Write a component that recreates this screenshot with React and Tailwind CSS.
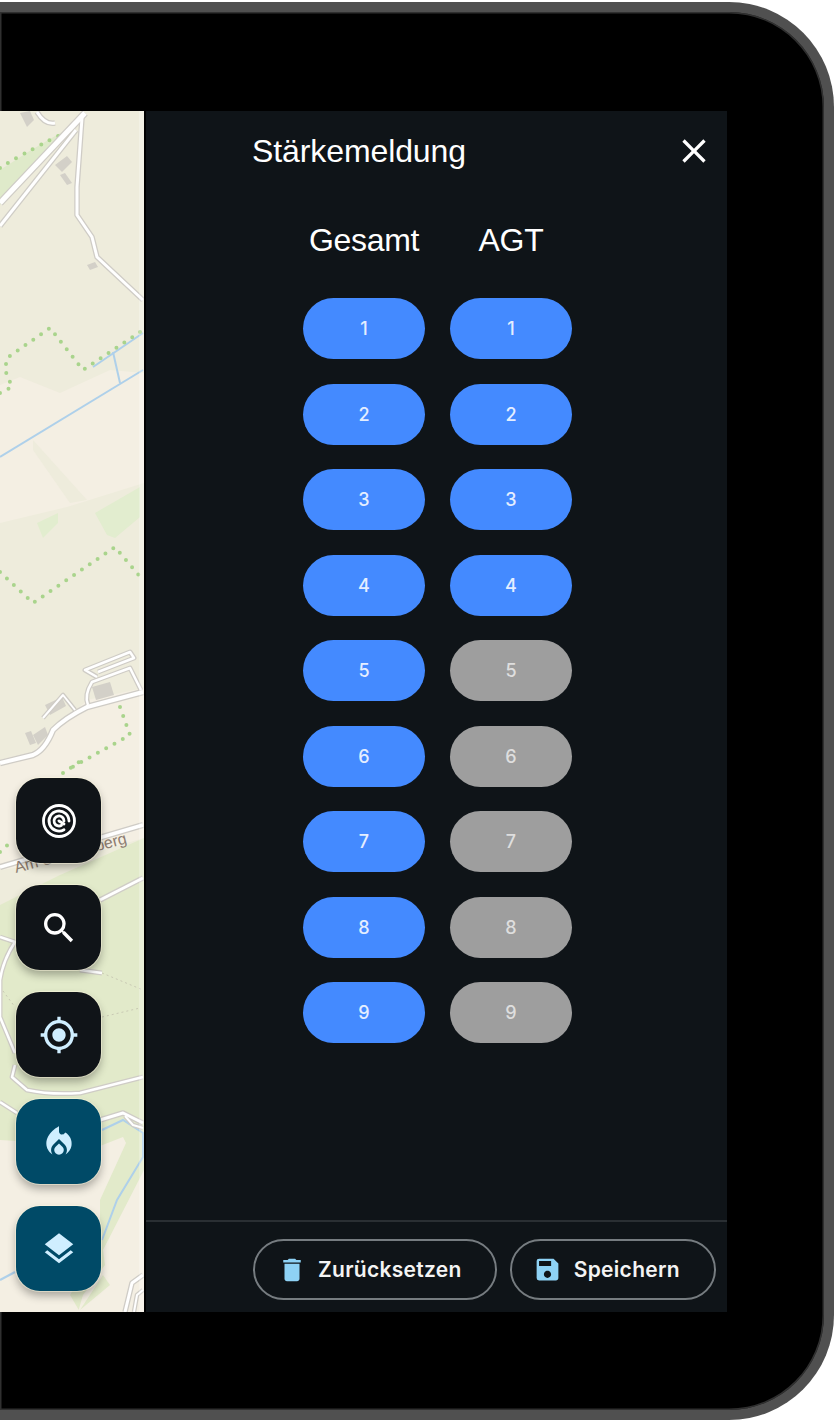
import React from "react";
import { MdClose, MdDelete, MdSave, MdSearch, MdGpsFixed, MdLocalFireDepartment, MdLayers } from "react-icons/md";

const roads = [
  ["M0 203L85 113", 5],
  ["M0 226L76 130", 3],
  ["M82 118L77 187L77 215L92 237L97 257L143 300", 3],
  ["M37 112Q45 125 55 123", 3],
  ["M0 763L33 755Q45 750 53 730Q65 718 87 707L143 692", 4],
  ["M88 705Q84 695 92 682L130 668L141 690", 2.5],
  ["M97 677L85 670L130 652L134 658L98 672", 2.5],
  ["M75 710L63 695L43 718", 2],
  ["M0 867L143 825", 3.5],
  ["M100 900L143 878", 3],
  ["M0 937L15 942Q3 960 0 980L0 1017L15 1053", 2.5],
  ["M80 970L102 973", 2.5],
  ["M15 1065L12 1077L27 1090Q50 1095 80 1093L143 1077", 2.5],
  ["M0 1102L17 1113", 2.5],
  ["M100 1120L123 1113L143 1123", 3],
  ["M125 1116L133 1125L143 1128", 2],
  ["M143 1275L132 1283L125 1312", 3],
  ["M143 1290L137 1295L134 1312", 2],
];
const dots = [
  "M0 168Q20 155 60 135",
  "M0 393L12 387L5 370L7 358L50 328L83 370L143 330",
  "M0 572L33 603L115 547L143 580",
  "M120 707L130 735L67 770",
  "M63 773L82 760",
  "M0 852L13 840",
];
const blue = [
  "M93 367L143 333",
  "M113 352L120 383",
  "M0 457L143 370",
  "M102 1130L123 1120L143 1133L143 1157L117 1200L102 1240",
  "M0 1280L15 1272",
];
const faint = ["M102 973L143 990", "M102 1017L140 1008", "M0 987L15 1007"];
const buildings = [
  "M20 113L30 111L34 120L27 127Z",
  "M55 165L67 156L72 162L62 172Z",
  "M60 175L65 173L72 183L67 185Z",
  "M87 265L95 262L98 267L90 270Z",
  "M92 687L110 682L114 695L96 700Z",
  "M45 705L62 697L66 706L50 715Z",
  "M33 735L45 727L48 735L38 745Z",
  "M25 733L31 731L36 743L30 745Z",
];

function MapArt() {
  return (
    <svg className="absolute inset-0 w-full h-full" viewBox="0 111 144 1201" preserveAspectRatio="none">
      <rect x="0" y="111" width="144" height="1201" fill="#eeecdc" />
      <path d="M0 385L20 377L60 393L110 370L144 373L144 483L67 507L0 523Z" fill="#f4efe3" />
      <path d="M33 440L87 500L70 503L33 450Z" fill="#eeecdc" />
      <path d="M0 170Q30 150 62 132L0 205Z" fill="#dfeaca" />
      <path d="M37 523L58 513L58 523L43 538Z" fill="#e2edcf" />
      <path d="M95 513L140 487L140 517L115 538L107 535Z" fill="#e2edcf" />
      <path d="M0 760L33 752L87 700L144 688L144 838L60 862L0 870Z" fill="#f4efe3" />
      <path d="M0 905L60 875L144 838L144 1312L0 1312Z" fill="#e2eaca" />
      <path d="M0 1140L100 1146L123 1137L126 1143L100 1200L100 1245L70 1295L80 1312L0 1312Z" fill="#f4efe3" />
      <path d="M144 1170L103 1250L105 1265L83 1295L78 1312L144 1312Z" fill="#f4efe3" />
      <path d="M103 1275L110 1285L80 1310Z" fill="#e2eaca" />
      {buildings.map((d) => (
        <path key={d} d={d} fill="#d3d0c8" />
      ))}
      {faint.map((d) => (
        <path key={d} d={d} fill="none" stroke="#c9c9b4" strokeWidth="1" strokeDasharray="2 3" />
      ))}
      {blue.map((d) => (
        <path key={d} d={d} fill="none" stroke="#aed0ea" strokeWidth="2" />
      ))}
      {dots.map((d) => (
        <path key={d} d={d} fill="none" stroke="#a9d48c" strokeWidth="4" strokeLinecap="round" strokeDasharray="0 9.5" />
      ))}
      {roads.map(([d, w]) => (
        <path key={d} d={d} fill="none" stroke="#cfccc6" strokeWidth={w + 2.5} strokeLinejoin="round" />
      ))}
      {roads.map(([d, w]) => (
        <path key={d + "w"} d={d} fill="none" stroke="#ffffff" strokeWidth={w} strokeLinejoin="round" />
      ))}
      <text x="16" y="873" transform="rotate(-15 16 873)" fontSize="16" fill="#8c7c70" fontFamily="Liberation Sans, sans-serif">
        Am Sonnenberg
      </text>
      <rect x="139" y="111" width="5" height="1201" fill="#ffffff" opacity="0.25" />
    </svg>
  );
}

function SpiralIcon() {
  return (
    <svg width="36" height="36" viewBox="0 0 36 36" fill="none" stroke="#ffffff" strokeWidth="2.8" strokeLinecap="round">
      <circle cx="18" cy="18" r="15.5" />
      <path d="M28 18A10 10 0 1 0 23 26.7" />
      <path d="M23 18A5 5 0 1 0 20.5 22.3" />
      <path d="M18 18L23 21" />
    </svg>
  );
}

function Fab({ teal, children }) {
  return (
    <div
      className={
        "w-[85px] h-[85px] rounded-[24px] flex items-center justify-center ring-1 ring-[#fffbe0]/50 shadow-[0_5px_9px_rgba(0,0,0,0.3)] " +
        (teal ? "bg-[#004a67]" : "bg-[#101418]")
      }
    >
      {children}
    </div>
  );
}

function Pill({ n, off }) {
  return (
    <div
      className={
        "w-[122px] h-[61px] rounded-full flex items-center justify-center text-[18px] font-medium " +
        (off ? "bg-[#9e9e9e] text-[#dedede]" : "bg-[#448aff] text-[#e4eeff]")
      }
    >
      {n}
    </div>
  );
}

const nums = [1, 2, 3, 4, 5, 6, 7, 8, 9];

function Column({ title, limit }) {
  return (
    <div className="w-[122px] flex flex-col items-center">
      <div className="h-[36px] mb-[40px] flex items-center whitespace-nowrap text-white text-[32px] tracking-[-0.3px] font-['Liberation_Sans',sans-serif]">
        {title}
      </div>
      <div className="flex flex-col gap-[24.5px]">
        {nums.map((n) => (
          <Pill key={n} n={n} off={n > limit} />
        ))}
      </div>
    </div>
  );
}

export default function App() {
  return (
    <div className="w-[835px] h-[1421px] bg-white overflow-hidden pt-[2px] font-['Inter',sans-serif]">
      <div className="w-[834px] h-[1418px] bg-black border-[10px] border-l-0 border-[#505050] rounded-r-[105px] pt-[99px] pr-[97px] shadow-[inset_0_0_0_1.5px_#303030]">
        <div className="h-[1201px] flex">
          <div className="relative w-[144px] shrink-0">
            <MapArt />
            <div className="absolute left-4 bottom-[21px] flex flex-col gap-[22px]">
              <Fab><SpiralIcon /></Fab>
              <Fab><MdSearch size={40} color="#ffffff" /></Fab>
              <Fab><MdGpsFixed size={40} color="#cfeeff" /></Fab>
              <Fab teal><MdLocalFireDepartment size={38} color="#cfeeff" /></Fab>
              <Fab teal><MdLayers size={38} color="#cfeeff" /></Fab>
            </div>
          </div>
          <div className="flex-1 flex flex-col bg-[#0f1418] border-l-2 border-black">
            <div className="h-[80px] shrink-0 flex items-center justify-between pl-[106px] pr-[13px]">
              <div className="text-white text-[32px] tracking-[-0.1px] font-['Liberation_Sans',sans-serif]">Stärkemeldung</div>
              <MdClose size={40} color="#ffffff" />
            </div>
            <div className="flex-1 flex justify-center gap-[25px] pt-[31px] pl-[2px]">
              <Column title="Gesamt" limit={9} />
              <Column title="AGT" limit={4} />
            </div>
            <div className="h-[92px] shrink-0 border-t-2 border-[#2a2f33] flex justify-end items-start gap-[13px] pt-[17px] pr-[11px]">
              <div className="h-[61px] rounded-full border-2 border-[#767c80] flex items-center gap-[11px] pl-[22px] pr-[33px] text-[#f4f4f4] text-[21px] font-semibold tracking-[0.3px]">
                <MdDelete size={30} color="#8ed2f5" />
                Zurücksetzen
              </div>
              <div className="h-[61px] rounded-full border-2 border-[#767c80] flex items-center gap-[12px] pl-[21px] pr-[34px] text-[#f4f4f4] text-[21px] font-semibold tracking-[0.3px]">
                <MdSave size={29} color="#8ed2f5" />
                Speichern
              </div>
            </div>
          </div>
        </div>
      </div>
    </div>
  );
}
